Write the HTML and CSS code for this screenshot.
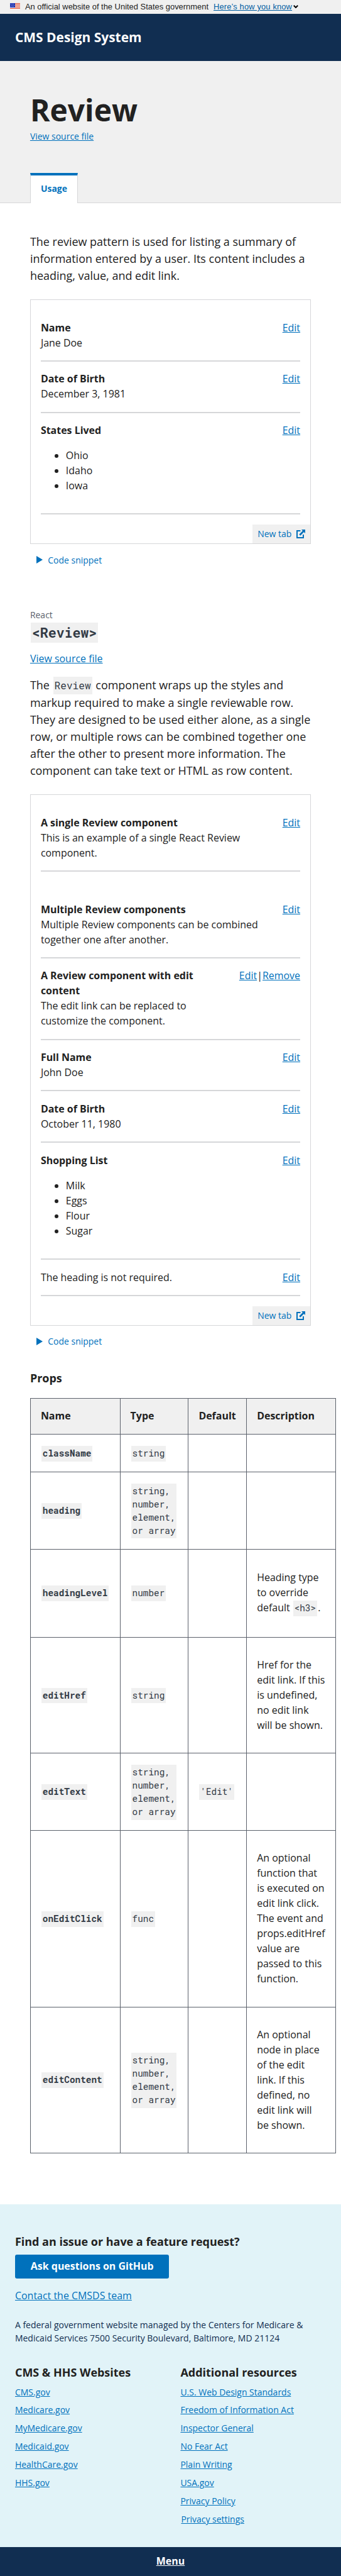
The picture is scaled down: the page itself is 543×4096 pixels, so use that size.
FILE: index.html
```html
<!DOCTYPE html>
<html lang="en">
<head>
<meta charset="utf-8">
<title>Review - CMS Design System</title>
<link rel="stylesheet" href="styles.css">
</head>
<body>
<div class="page">
  <div class="banner">
    <svg class="flag" viewBox="0 0 16 11" shape-rendering="crispEdges"><rect width="16" height="11" fill="#fff"/><path fill="#db3e1f" d="M0 0h16v1H0zM0 2h16v1H0zM0 4h16v1H0zM0 6h16v1H0zM0 8h16v1H0zM0 10h16v1H0z"/><rect width="8" height="7" fill="#1e33b1"/><g fill="#fff" shape-rendering="auto"><circle cx="1.5" cy="1.5" r=".45"/><circle cx="3.5" cy="1.5" r=".45"/><circle cx="5.5" cy="1.5" r=".45"/><circle cx="2.5" cy="3.5" r=".45"/><circle cx="4.5" cy="3.5" r=".45"/><circle cx="6.5" cy="3.5" r=".45"/><circle cx="1.5" cy="5.5" r=".45"/><circle cx="3.5" cy="5.5" r=".45"/><circle cx="5.5" cy="5.5" r=".45"/></g></svg>
    <span class="banner-text">An official website of the United States government</span>
    <a class="banner-link">Here’s how you know</a>
    <svg class="chevron" viewBox="0 0 8 5"><path d="M.8.8 4 4 7.200.8" fill="none" stroke="#000" stroke-width="2"/></svg>
  </div>
  <header class="header">CMS Design System</header>
  <section class="hero">
    <h1 class="title">Review</h1>
    <a class="link small">View source file</a>
    <div class="tab">Usage</div>
  </section>
  <main class="main">
    <p class="lead">The review pattern is used for listing a summary of information entered by a user. Its content includes a heading, value, and edit link.</p>
    <div class="example">
      <div class="rows">
        <div class="row"><div class="body"><b>Name</b><div>Jane Doe</div></div><a class="link">Edit</a></div>
        <div class="row"><div class="body"><b>Date of Birth</b><div>December 3, 1981</div></div><a class="link">Edit</a></div>
        <div class="row"><div class="body"><b>States Lived</b><ul class="list"><li>Ohio</li><li>Idaho</li><li>Iowa</li></ul></div><a class="link">Edit</a></div>
      </div>
      <div class="newtab">New tab <svg class="ext" viewBox="0 0 14 14"><path d="M6.500 2H1v11h10V8" fill="none" stroke="#0071bc" stroke-width="2"/><path d="M8 0h6v6l-2-2-5.700 5.700-2-2L10 2z" fill="#0071bc"/></svg></div>
    </div>
    <div class="snippet"><span class="tri"></span>Code snippet</div>

    <div class="kind">React</div>
    <h2 class="component"><code class="code">&lt;Review&gt;</code></h2>
    <div class="source"><a class="link">View source file</a></div>
    <p class="lead second">The <code class="code">Review</code> component wraps up the styles and markup required to make a single reviewable row. They are designed to be used either alone, as a single row, or multiple rows can be combined together one after the other to present more information. The component can take text or HTML as row content.</p>
    <div class="example">
      <div class="rows">
        <div class="row spaced"><div class="body"><b>A single Review component</b><div>This is an example of a single React Review component.</div></div><a class="link">Edit</a></div>
        <div class="row"><div class="body"><b>Multiple Review components</b><div>Multiple Review components can be combined together one after another.</div></div><a class="link">Edit</a></div>
        <div class="row"><div class="body"><b>A Review component with edit content</b><div>The edit link can be replaced to customize the component.</div></div><span><a class="link">Edit</a>|<a class="link">Remove</a></span></div>
        <div class="row"><div class="body"><b>Full Name</b><div>John Doe</div></div><a class="link">Edit</a></div>
        <div class="row"><div class="body"><b>Date of Birth</b><div>October 11, 1980</div></div><a class="link">Edit</a></div>
        <div class="row"><div class="body"><b>Shopping List</b><ul class="list"><li>Milk</li><li>Eggs</li><li>Flour</li><li>Sugar</li></ul></div><a class="link">Edit</a></div>
        <div class="row"><div class="body">The heading is not required.</div><a class="link">Edit</a></div>
      </div>
      <div class="newtab">New tab <svg class="ext" viewBox="0 0 14 14"><path d="M6.500 2H1v11h10V8" fill="none" stroke="#0071bc" stroke-width="2"/><path d="M8 0h6v6l-2-2-5.700 5.700-2-2L10 2z" fill="#0071bc"/></svg></div>
    </div>
    <div class="snippet"><span class="tri"></span>Code snippet</div>

    <h3 class="props-title">Props</h3>
    <table class="props">
      <colgroup><col class="c-name"><col class="c-type"><col class="c-default"><col class="c-desc"></colgroup>
      <thead><tr class="r-head"><th>Name</th><th>Type</th><th>Default</th><th>Description</th></tr></thead>
      <tbody>
        <tr class="r-1"><td><code class="code">className</code></td><td><code class="code">string</code></td><td></td><td></td></tr>
        <tr class="r-4"><td><code class="code">heading</code></td><td><code class="code">string,<br>number,<br>element,<br>or array</code></td><td></td><td></td></tr>
        <tr class="r-level"><td><code class="code">headingLevel</code></td><td><code class="code">number</code></td><td></td><td>Heading type to override default <code class="code inline">&lt;h3&gt;</code>.</td></tr>
        <tr class="r-href"><td><code class="code">editHref</code></td><td><code class="code">string</code></td><td></td><td>Href for the edit link. If this is undefined, no edit link will be shown.</td></tr>
        <tr class="r-4"><td><code class="code">editText</code></td><td><code class="code">string,<br>number,<br>element,<br>or array</code></td><td><code class="code">'Edit'</code></td><td></td></tr>
        <tr class="r-click"><td><code class="code">onEditClick</code></td><td><code class="code">func</code></td><td></td><td>An optional function that is executed on edit link click. The event and props.editHref value are passed to this function.</td></tr>
        <tr class="r-content"><td><code class="code">editContent</code></td><td><code class="code">string,<br>number,<br>element,<br>or array</code></td><td></td><td>An optional node in place of the edit link. If this defined, no edit link will be shown.</td></tr>
      </tbody>
    </table>
  </main>
  <footer class="footer">
    <h2 class="f-title">Find an issue or have a feature request?</h2>
    <a class="button">Ask questions on GitHub</a>
    <div class="contact"><a class="link">Contact the CMSDS team</a></div>
    <p class="address">A federal government website managed by the Centers for Medicare &amp; Medicaid Services 7500 Security Boulevard, Baltimore, MD 21124</p>
    <div class="columns">
      <div class="column">
        <h2 class="f-title">CMS &amp; HHS Websites</h2>
        <a class="link">CMS.gov</a><a class="link">Medicare.gov</a><a class="link">MyMedicare.gov</a><a class="link">Medicaid.gov</a><a class="link">HealthCare.gov</a><a class="link">HHS.gov</a>
      </div>
      <div class="column">
        <h2 class="f-title">Additional resources</h2>
        <a class="link">U.S. Web Design Standards</a><a class="link">Freedom of Information Act</a><a class="link">Inspector General</a><a class="link">No Fear Act</a><a class="link">Plain Writing</a><a class="link">USA.gov</a><a class="link">Privacy Policy</a><a class="link settings">Privacy settings</a>
      </div>
    </div>
  </footer>
  <nav class="menu"><a class="menu-link">Menu</a></nav>
</div>
</body>
</html>
```
FILE: styles.css
```css
* { box-sizing: border-box; }
body { margin: 0; background: #fff; overflow-x: hidden; }
.page {
  zoom: 0.99805;
  width: 544px;
  height: 4104px;
  display: flex;
  flex-direction: column;
  font: 16px/24px "Open Sans", sans-serif;
  color: #212121;
}
h1, h2, h3, p, ul { margin: 0; padding: 0; }
.link { color: #0071bc; text-decoration: underline; }
.small { font-size: 14px; line-height: 21px; }

.banner {
  height: 22px;
  padding-left: 16px;
  display: flex;
  align-items: center;
  background: #f0f0f0;
  font: 12.96px/16px "Liberation Sans", Arial, sans-serif;
}
.flag { width: 16px; height: 11px; margin: 0 8px 2px 0; }
.banner-text { margin-right: 8px; }
.banner-link { color: #005ea2; text-decoration: underline; letter-spacing: .13px; }
.chevron { width: 8px; height: 5px; margin-left: 2px; }

.header {
  height: 75px;
  padding: 0 24px;
  background: #112e51;
  color: #fff;
  font-size: 21px;
  font-weight: 700;
  line-height: 75px;
}

.hero {
  height: 227px;
  padding: 48px 48px 0;
  display: flex;
  flex-direction: column;
  align-items: flex-start;
  background: #f0f0f0;
  border-bottom: 1px solid #d6d7d9;
}
.title { font-size: 48px; line-height: 60px; margin-bottom: 2px; }
.tab {
  width: 76px;
  height: 48px;
  margin-top: 48px;
  flex: none;
  background: #fff;
  border: 1px solid #d6d7d9;
  border-top: 4.01px solid #0071bc;
  border-bottom: 0;
  padding: 11px 16px 0;
  color: #0071bc;
  font-size: 14px;
  font-weight: 700;
  line-height: 21px;
}

.main { padding: 48px 48px 0; height: 3188px; }
.lead { font-size: 18px; line-height: 27px; margin-bottom: 24px; }
.example { border: 1px solid #d6d7d9; }
.rows { padding: 16px 16px 0; }
.row {
  display: flex;
  align-items: flex-start;
  justify-content: space-between;
  gap: 16px;
  padding: 16.6px 0 15.4px;
  border-bottom: 2.01px solid #d6d7d9;
}
.row b { display: block; }
.spaced { margin-bottom: 32px; }
.list { padding: 16px 0 16px 40px; }
.newtab {
  width: 92px;
  height: 30px;
  margin: 16px 0 0 auto;
  padding: 0 8px;
  display: flex;
  align-items: center;
  justify-content: space-between;
  background: #f0f0f0;
  color: #0071bc;
  font-size: 14px;
}
.ext { width: 14px; height: 14px; }
.snippet {
  display: flex;
  align-items: center;
  height: 21px;
  margin-top: 15px;
  padding-left: 10px;
  color: #0071bc;
  font-size: 14px;
}
.tri {
  margin: -1px 8.4px 0 0;
  border-left: 10.02px solid #0071bc;
  border-top: 6.02px solid transparent;
  border-bottom: 6.02px solid transparent;
}

.code {
  display: inline-block;
  margin: 0 1px;
  padding: 3px 2px;
  background: #f0f0f0;
  color: #323a45;
  font-family: "Roboto Mono", "DejaVu Sans Mono", monospace;
  font-size: 14.4px;
  line-height: 19px;
}
.kind { margin-top: 66.6px; color: #5b616b; font-size: 14px; line-height: 21px; }
.component { margin-top: 1.4px; height: 32px; display: flex; }
.component .code { font-size: 21.6px; line-height: 28px; padding: 2px; }
.source { margin: 14px 0 16px; }
.lead .code { font-size: 16.2px; line-height: 22px; }
.second { height: 164px; }

.props-title { margin: 34px 0 19px; font-size: 18px; line-height: 27px; }
.props { width: 488px; table-layout: fixed; border-collapse: collapse; }
.props th, .props td {
  padding: 0 16px;
  border: 1px solid #5b616b;
  text-align: left;
  vertical-align: middle;
}
.props th { background: #f0f0f0; }
.props td { padding-top: 1px; }
.props td:first-child { font-weight: 700; }
.props td .code { line-height: 21px; padding: 2px; margin-right: -8px; }
.props td .inline { line-height: 19px; padding: 3px 2px; margin-right: 1px; }
.c-name { width: 143px; }
.c-type { width: 109px; }
.c-default { width: 93px; }
.c-desc { width: 142px; }
.r-head { height: 57px; }
.r-1 { height: 60px; }
.r-4 { height: 123px; }
.r-level { height: 140px; }
.r-href { height: 185px; }
.r-click { height: 281px; }
.r-content { height: 233px; }

.footer { height: 546px; padding: 46px 24px 0; background: #e1f3f8; }
.f-title { font-size: 18px; line-height: 27px; }
.button {
  display: block;
  width: 246px;
  height: 38px;
  margin-top: 7px;
  border-radius: 3px;
  background: #0071bc;
  color: #fff;
  font-weight: 700;
  line-height: 38px;
  text-align: center;
}
.contact { margin-top: 16px; }
.address { margin-top: 24px; color: #112e51; font-size: 14px; line-height: 21px; }
.columns { display: grid; grid-template-columns: 264px 1fr; margin-top: 30px; font-size: 14px; line-height: 21px; }
.column { display: flex; flex-direction: column; align-items: flex-start; gap: 8px; }
.settings { margin-left: 1px; }
.menu { height: 46px; background: #112e51; text-align: center; line-height: 46px; }
.menu-link { color: #fff; font-weight: 700; text-decoration: underline; }
```
